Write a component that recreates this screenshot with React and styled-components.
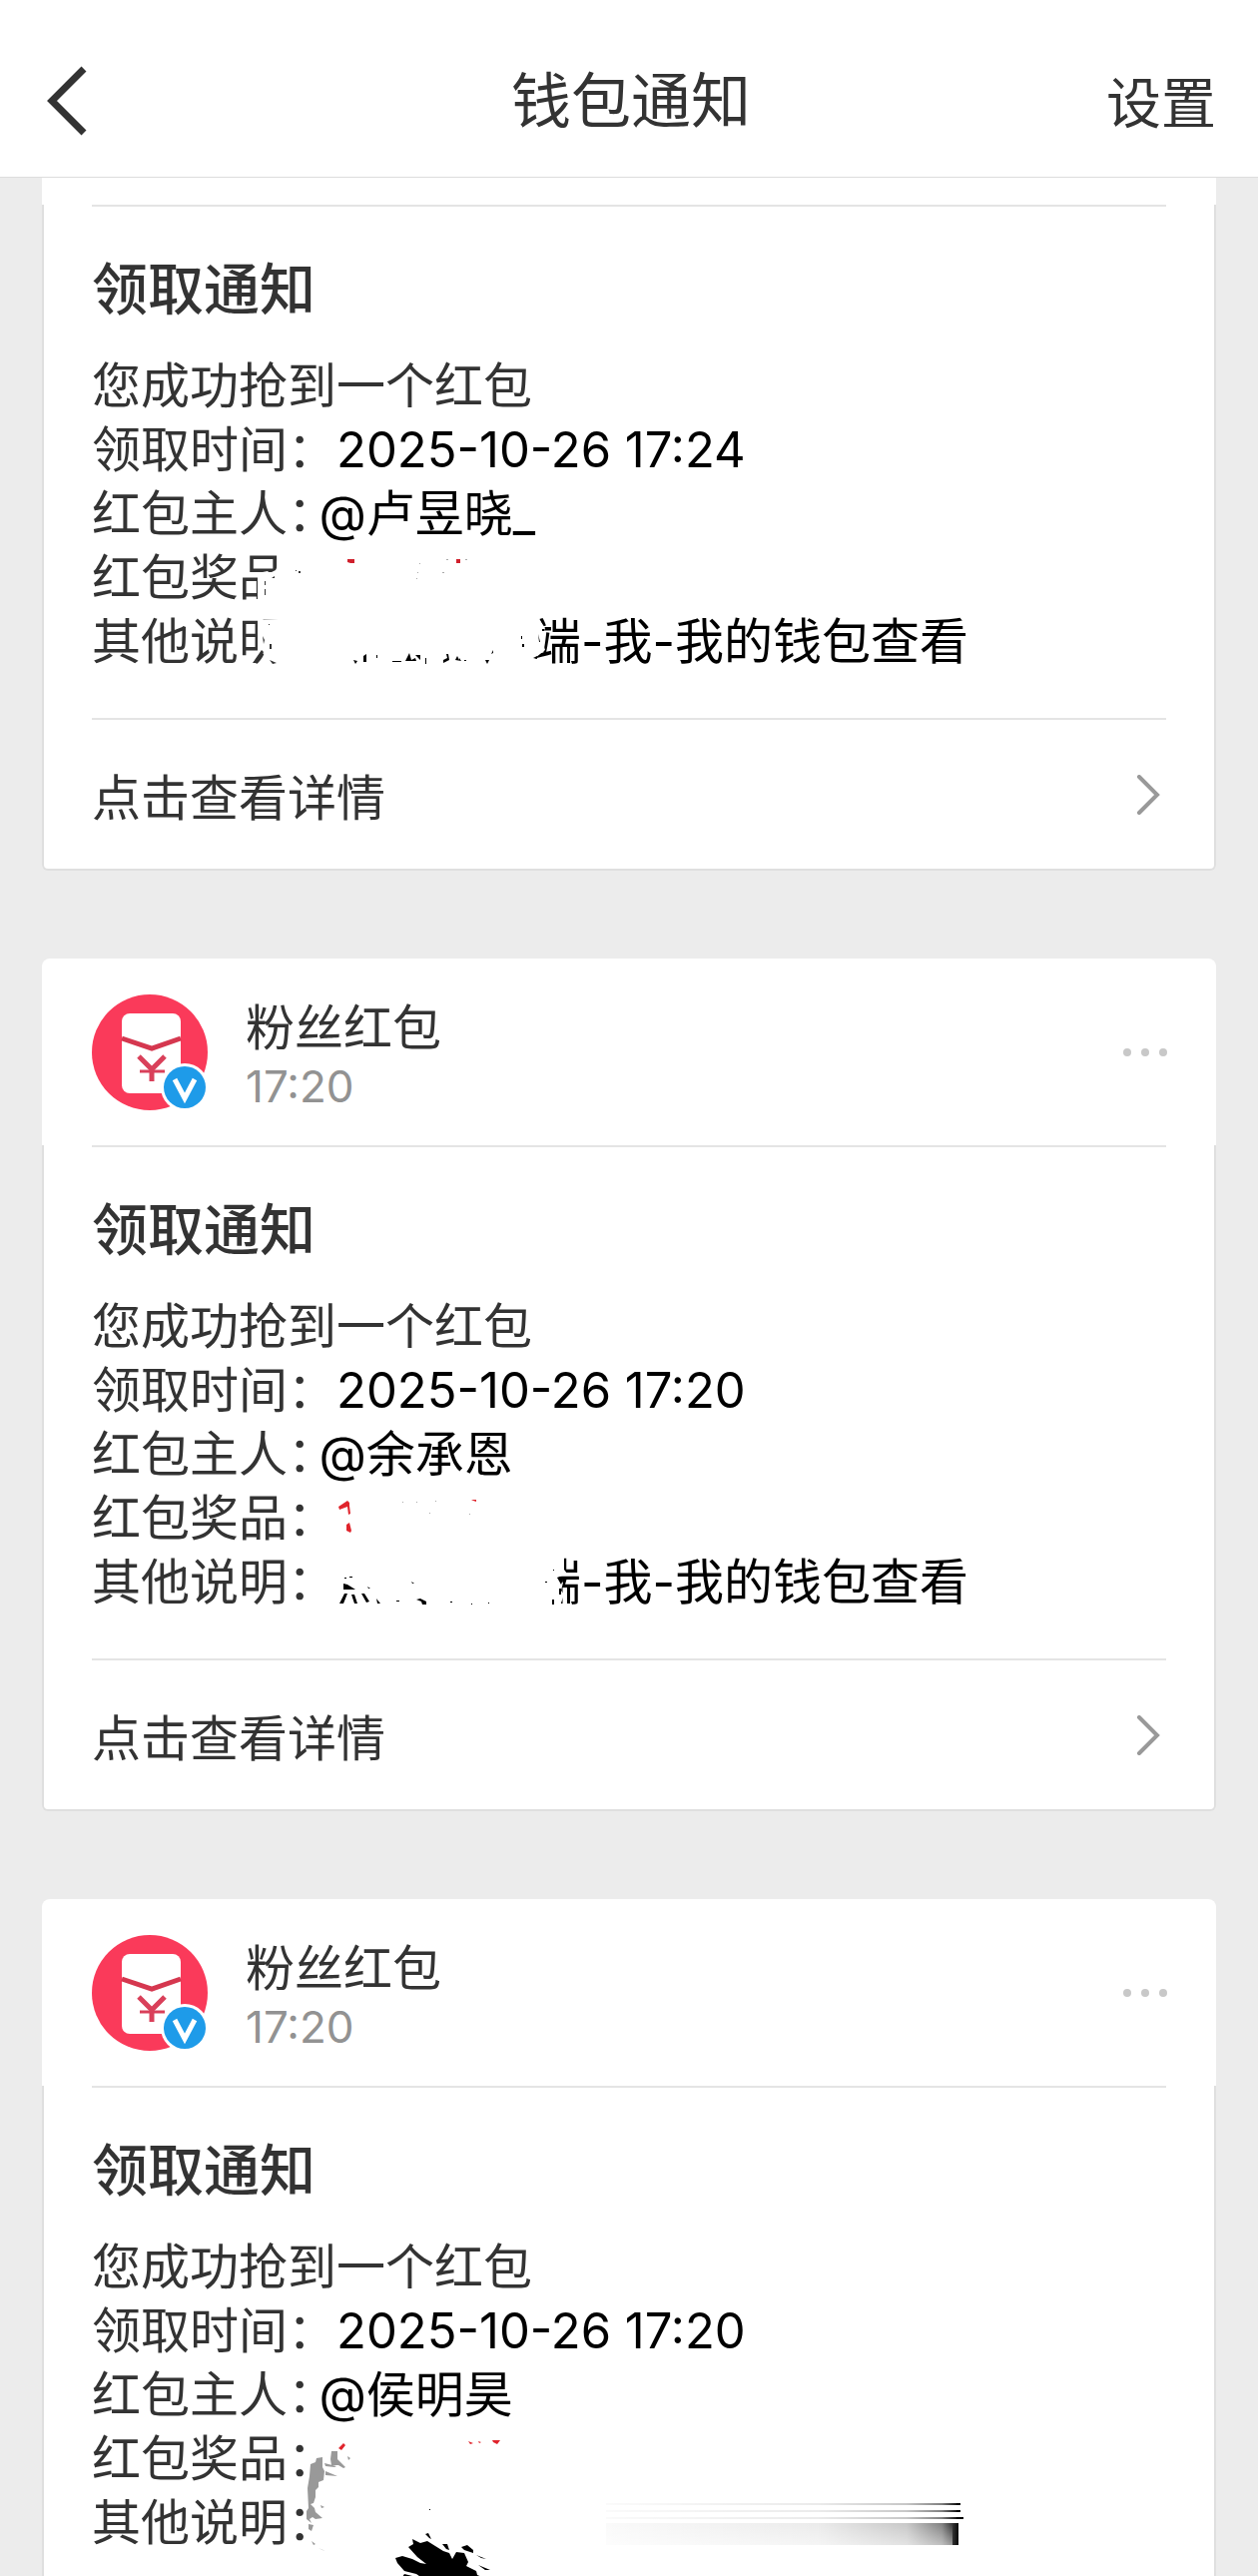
import styled, { createGlobalStyle, css } from 'styled-components';

const notices = [
	{
		id: 1,
		clipped: true,
		hasDetail: true,
		date: '2025-10-26 17:24',
		owner: '@卢昱晓_',
		smudge: 'wide',
	},
	{
		id: 2,
		hasDetail: true,
		time: '17:20',
		date: '2025-10-26 17:20',
		owner: '@余承恩',
		smudge: 'light',
	},
	{
		id: 3,
		time: '17:20',
		date: '2025-10-26 17:20',
		owner: '@侯明昊',
		smudge: 'heavy',
	},
];

const App = () => {
	return (
		<Page>
			<GlobalStyle />
			<Header>
				<IconButton aria-label="返回">
					<BackIcon />
				</IconButton>
				<h1>钱包通知</h1>
				<Settings>设置</Settings>
			</Header>
			<List>
				{notices.map((notice) => (
					<Notice key={notice.id} {...notice} />
				))}
			</List>
		</Page>
	);
};

const Notice = ({ clipped, hasDetail, time, date, owner, smudge }) => {
	const Smudge = smudges[smudge];

	return (
		<Card>
			<CardHead $clipped={clipped}>
				{!clipped && (
					<>
						<Avatar />
						<Sender>
							<strong>粉丝红包</strong>
							<time>{time}</time>
						</Sender>
						<IconButton aria-label="更多">
							<DotsIcon />
						</IconButton>
					</>
				)}
			</CardHead>
			<CardBody>
				<Content>
					<h2>领取通知</h2>
					<Fields>
						<p>您成功抢到一个红包</p>
						<p>
							领取时间：<Value>{date}</Value>
						</p>
						<p>
							<Tight>红包主人：</Tight>
							<Value>{owner}</Value>
						</p>
						<p>
							<Tight $on={smudge === 'heavy'}>红包奖品：</Tight>
						</p>
						<p>
							<Tight $on={smudge === 'heavy'}>其他说明：</Tight>
							{smudge !== 'heavy' && (
								<Value $indent>端-我-我的钱包查看</Value>
							)}
						</p>
						<Smudge />
					</Fields>
				</Content>
				{hasDetail && (
					<DetailLink href="#detail">
						<span>点击查看详情</span>
						<ArrowIcon />
					</DetailLink>
				)}
			</CardBody>
		</Card>
	);
};

const BackIcon = () => (
	<svg width="42" height="70" viewBox="0 0 42 70" fill="none">
		<path d="M38 3 L6 35 L38 67" stroke="#333" strokeWidth="7" />
	</svg>
);

const ArrowIcon = () => (
	<svg width="24" height="40" viewBox="0 0 24 40" fill="none">
		<path
			d="M3 2 L21 20 L3 38"
			stroke="#999"
			strokeWidth="4"
			strokeLinecap="round"
		/>
	</svg>
);

const DotsIcon = () => (
	<svg width="46" height="10" viewBox="0 0 46 10" fill="#c8c8c8">
		<circle cx="5" cy="5" r="4" />
		<circle cx="23" cy="5" r="4" />
		<circle cx="41" cy="5" r="4" />
	</svg>
);

const Avatar = () => (
	<svg width="116" height="116" viewBox="0 0 116 116" fill="none">
		<circle cx="58" cy="58" r="58" fill="#fa3a5a" />
		<rect x="30" y="19" width="59" height="80" rx="8" fill="#fff" />
		<path d="M30 44 L60 54 L89 44" stroke="#d5374f" strokeWidth="5" />
		<path
			d="M47 62 L60 75 L73 62 M60 75 V87"
			stroke="#d9405a"
			strokeWidth="5"
		/>
		<path d="M48 77 H73" stroke="#d9405a" strokeWidth="3" />
		<circle cx="93" cy="93" r="24" fill="#fff" />
		<circle cx="93" cy="93" r="21" fill="#1e9be9" />
		<path d="M83 85 L93 104 L103 85" stroke="#fff" strokeWidth="5" />
	</svg>
);

// The smudges rub out the last two lines of the fields (64px each)
const WideSmudge = () => (
	<SmudgeSvg viewBox="0 0 640 128">
		<path
			fill="#fff"
			d="M166 27 L176 25 L178 27 L184 24 L192 8 L250 8 V62 H166 V40 Z
			M166 74 L250 70 L446 70 L454 82 L450 92 L454 104 L444 112 V122 H168 L173 108 L166 106 Z"
		/>
		<g fill="#333">
			<path d="M173 35 h1 v4 h-1z M173 43 h1 v6 h-1z M180 32 l3 -2 v2z M207 25 h2 v2 h-2z M204 24 h1 v1 h-1z" />
			<path d="M171 90 l2 4 -1 4z M172 106 l-6 11 h-5 l9 -13z M178 98 h2 v5 h-2z M178 114 l7 3 -4 1z M177 78 h1 v1 h-1z" />
		</g>
		<g fill="#000">
			<path d="M262 114 l4 1 -2 3z M272 110 l3 -2 v8 h-3z M285 109 h1 v3 h-1z M301 115 h9 v1 h-9z" />
			<path d="M314 115 l4 -8 2 7 4 -2 1 3 h-7z M324 109 h5 v5 l-3 -3z M334 112 h1 v6 h-1z" />
			<path d="M352 117 v-3 l4 -2 -1 -4 h2 l1 6z M364 114 l2 -4 2 4 v-2 l2 3z M373 114 h2 v1 h-2z M394 114 h4 l-2 4z M400 108 l2 -4 v3z" />
			<path d="M431 98 h2 v3 h-2z M430 90 h1 v3 h-1z M442 112 l4 -2 v3z M451 83 h2 v2 h-2z M447 88 l2 8 h-1z" />
		</g>
		<g fill="#d0202c">
			<path d="M256 13 h7 v4 h-4 l-3 -1z M365 13 h4 v4 h-4z" />
		</g>
		<g fill="#aaa">
			<path d="M328 17 h1 v1 h-1z M326 26 h1 v1 h-1z M325 32 h1 v1 h-1z M355 13 h2 v1 h-2z M351 26 h2 v1 h-2z M374 13 h2 v1 h-2z" />
		</g>
	</SmudgeSvg>
);

const LightSmudge = () => (
	<SmudgeSvg viewBox="0 0 640 128">
		<path
			fill="#fff"
			d="M245 68 H473 V83 L476 87 L466 91 L472 96 L470 104 L473 108 L468 122 H245 Z"
		/>
		<g fill="#e0242c">
			<path d="M247 20 l9 -6 2 2 v3 l1 8 -2 1 -1 -8 -8 3z M255 38 l3 -2 2 8 -1 2 -4 -2z M380 13 l5 0 v2 l-3 -1z" />
		</g>
		<g fill="#000">
			<path d="M252 97 l4 1 8 5 h-12z M248 117 l5 -10 h3 l-4 10z M260 108 h3 l3 9 h-3z M270 107 h3 l5 8 -3 1z M285 112 l4 5 h-3z" />
			<path d="M253 91 h2 v1 h-2z M258 90 h3 v1 h-3z M276 100 l3 2 h-2z M305 114 h3 v1 h-3z M320 95 l3 2 h-2z M325 113 l4 -1 6 3 v3 h-4 l-1 -3z" />
			<path d="M359 115 h2 v1 h-2z M380 117 h1 v1 h-1z M397 116 h1 v1 h-1z M454 95 h2 v1 h-2z M462 83 h1 v1 h-1z M466 91 l6 2 -2 5z M468 102 h2 v6 h-2z M461 113 h2 v5 h-2z" />
		</g>
		<g fill="#aaa">
			<path d="M311 15 h1 v1 h-1z M325 15 h1 v1 h-1z M344 14 h1 v1 h-1z M338 26 h1 v1 h-1z M378 27 h1 v1 h-1z" />
		</g>
	</SmudgeSvg>
);

const HeavySmudge = () => (
	<SmudgeSvg viewBox="0 0 640 128">
		<defs>
			<linearGradient id="trail">
				<stop offset="0" stopColor="#000" stopOpacity="0.02" />
				<stop offset="0.6" stopColor="#000" stopOpacity="0.08" />
				<stop offset="0.85" stopColor="#000" stopOpacity="0.22" />
				<stop offset="0.95" stopColor="#000" stopOpacity="0.5" />
				<stop offset="1" stopColor="#000" />
			</linearGradient>
			<linearGradient id="wash" x2="0" y2="1">
				<stop offset="0" stopColor="#fff" stopOpacity="0" />
				<stop offset="1" stopColor="#fff" stopOpacity="0.5" />
			</linearGradient>
		</defs>
		<path
			fill="#999"
			d="M219 37 l5 -2 1 -4 6 -1 v10 l2 4 -1 9 -5 2 0 5 -3 3 v7 l-2 6 -3 1 4 4 1 4 7 6 -7 1 -3 -2 -3 2 2 4 -5 -4 0 -8 2 -3 -1 -20 2 -12z
			M240 24 l6 0 v8 l8 8 -2 1 -5 -3 -7 0 -1 -6z M233 36 l12 3 -2 1 -9 -1z M234 44 l12 5 -12 -1z
			M217 97 l5 1 -2 6 -3 -2z M220 114 l4 3 -2 1z M227 121 l7 3 -3 -1z M256 29 l3 2 -2 2z M229 78 l4 2 -3 1z"
		/>
		<path
			fill="#e0242c"
			d="M247 21 l5 -5 2 2 -4 5z M377 14 l5 2 -3 1z M401 13 l8 0 -3 4 -4 -2z M387 14 l3 1 -2 1z"
		/>
		<path
			fill="#000"
			d="M317 120 l5 -3 -1 -5 8 4 7 -2 16 10 6 2 3 6 4 -7 8 1 4 9 -2 4 10 5 1 4 12 5 6 2 v10 h-64 l-9 -6 -14 -4 -6 -5 2 -3 12 3 10 4 -10 -7 -12 -3 -7 -8 -2 -5 7 -2 10 3 8 4 6 1 -9 -7z
			M334 107 l3 -1 3 6 -2 -1z M351 117 l5 0 2 6 -3 -1z M370 120 l6 -2 6 5 0 3 -9 -3z M385 128 l10 4 -5 -1z M387 138 l12 5 -5 0z M338 82 h1 v1 h-1z"
		/>
		<g fill="url(#trail)">
			<path d="M515 76 h354 v2 h-354z M515 83 h354 v2 h-354z M515 90 h354 v2 h-354z M515 96 h353 v22 h-353z" />
		</g>
		<path fill="url(#wash)" d="M515 96 h347 v22 h-347z" />
		<path fill="#000" d="M866 76 h4 v2 h-4z M866 83 h4 v2 h-4z M866 90 h7 v2 h-7z" />
	</SmudgeSvg>
);

const smudges = {
	wide: WideSmudge,
	light: LightSmudge,
	heavy: HeavySmudge,
};

const GlobalStyle = createGlobalStyle`
	* {
		box-sizing: border-box;
		margin: 0;
		padding: 0;
	}

	body {
		background: #ececec;
		color: #333;
		font-family: Inter, 'Noto Sans CJK SC', sans-serif;
	}
`;

const Page = styled.div`
	height: 100vh;
	display: flex;
	flex-direction: column;
`;

const Header = styled.header`
	flex-shrink: 0;
	display: grid;
	grid-template-columns: 1fr auto 1fr;
	align-items: center;
	height: 178px;
	padding: 24px 42px 0 46px;
	background: #fff;
	border-bottom: 1px solid #ddd;

	h1 {
		font-size: 60px;
		font-weight: 400;
		line-height: 72px;
	}
`;

const IconButton = styled.button`
	justify-self: start;
	display: flex;
	background: none;
	border: none;
	cursor: pointer;
`;

const Settings = styled.button`
	justify-self: end;
	padding-top: 4px;
	background: none;
	border: none;
	color: #333;
	font-family: inherit;
	font-size: 55px;
	line-height: 72px;
	cursor: pointer;
`;

const List = styled.main`
	flex: 1;
	min-height: 0;
	padding: 0 42px;
	overflow-y: auto;
	scrollbar-width: none;
`;

const Card = styled.article`
	margin-bottom: 88px;
`;

const CardHead = styled.div`
	display: flex;
	align-items: center;
	height: 187px;
	padding: 0 48px 0 50px;
	background: #fff;
	border-radius: 8px 8px 0 0;

	${({ $clipped }) =>
		$clipped &&
		css`
			height: 27px;
			border-radius: 0;
		`}
`;

const Sender = styled.div`
	flex: 1;
	display: flex;
	flex-direction: column;
	padding: 4px 0 0 38px;

	strong {
		font-size: 49px;
		font-weight: 400;
		line-height: 64px;
	}

	time {
		color: #929292;
		font-size: 44px;
		line-height: 52px;
	}
`;

const CardBody = styled.div`
	padding: 0 48px;
	background: #fff;
	border: 2px solid #dfdfdf;
	border-top: none;
	border-radius: 0 0 6px 6px;
`;

const Content = styled.div`
	padding: 51px 0 44px;
	border-top: 2px solid #e4e4e4;
	border-bottom: 2px solid #e4e4e4;

	h2 {
		margin-bottom: 33px;
		font-size: 56px;
		font-weight: 500;
		line-height: 64px;
	}
`;

const Fields = styled.div`
	position: relative;
	font-size: 49px;
	line-height: 64px;
	white-space: nowrap;
`;

const Tight = styled.span`
	${({ $on = true }) =>
		$on &&
		css`
			padding-right: 7px;
			font-feature-settings: 'halt';
		`}
`;

const Value = styled.span`
	color: #000;
	margin-left: ${({ $indent }) => ($indent ? '196px' : '0')};
`;

const SmudgeSvg = styled.svg`
	position: absolute;
	left: 0;
	bottom: 0;
	width: 640px;
	height: 128px;
	overflow: visible;
	pointer-events: none;
`;

const DetailLink = styled.a`
	display: flex;
	align-items: center;
	justify-content: space-between;
	height: 149px;
	padding-right: 6px;
	color: #333;
	font-size: 49px;
	line-height: 64px;
	text-decoration: none;

	span {
		padding-top: 8px;
	}
`;

export default App;
